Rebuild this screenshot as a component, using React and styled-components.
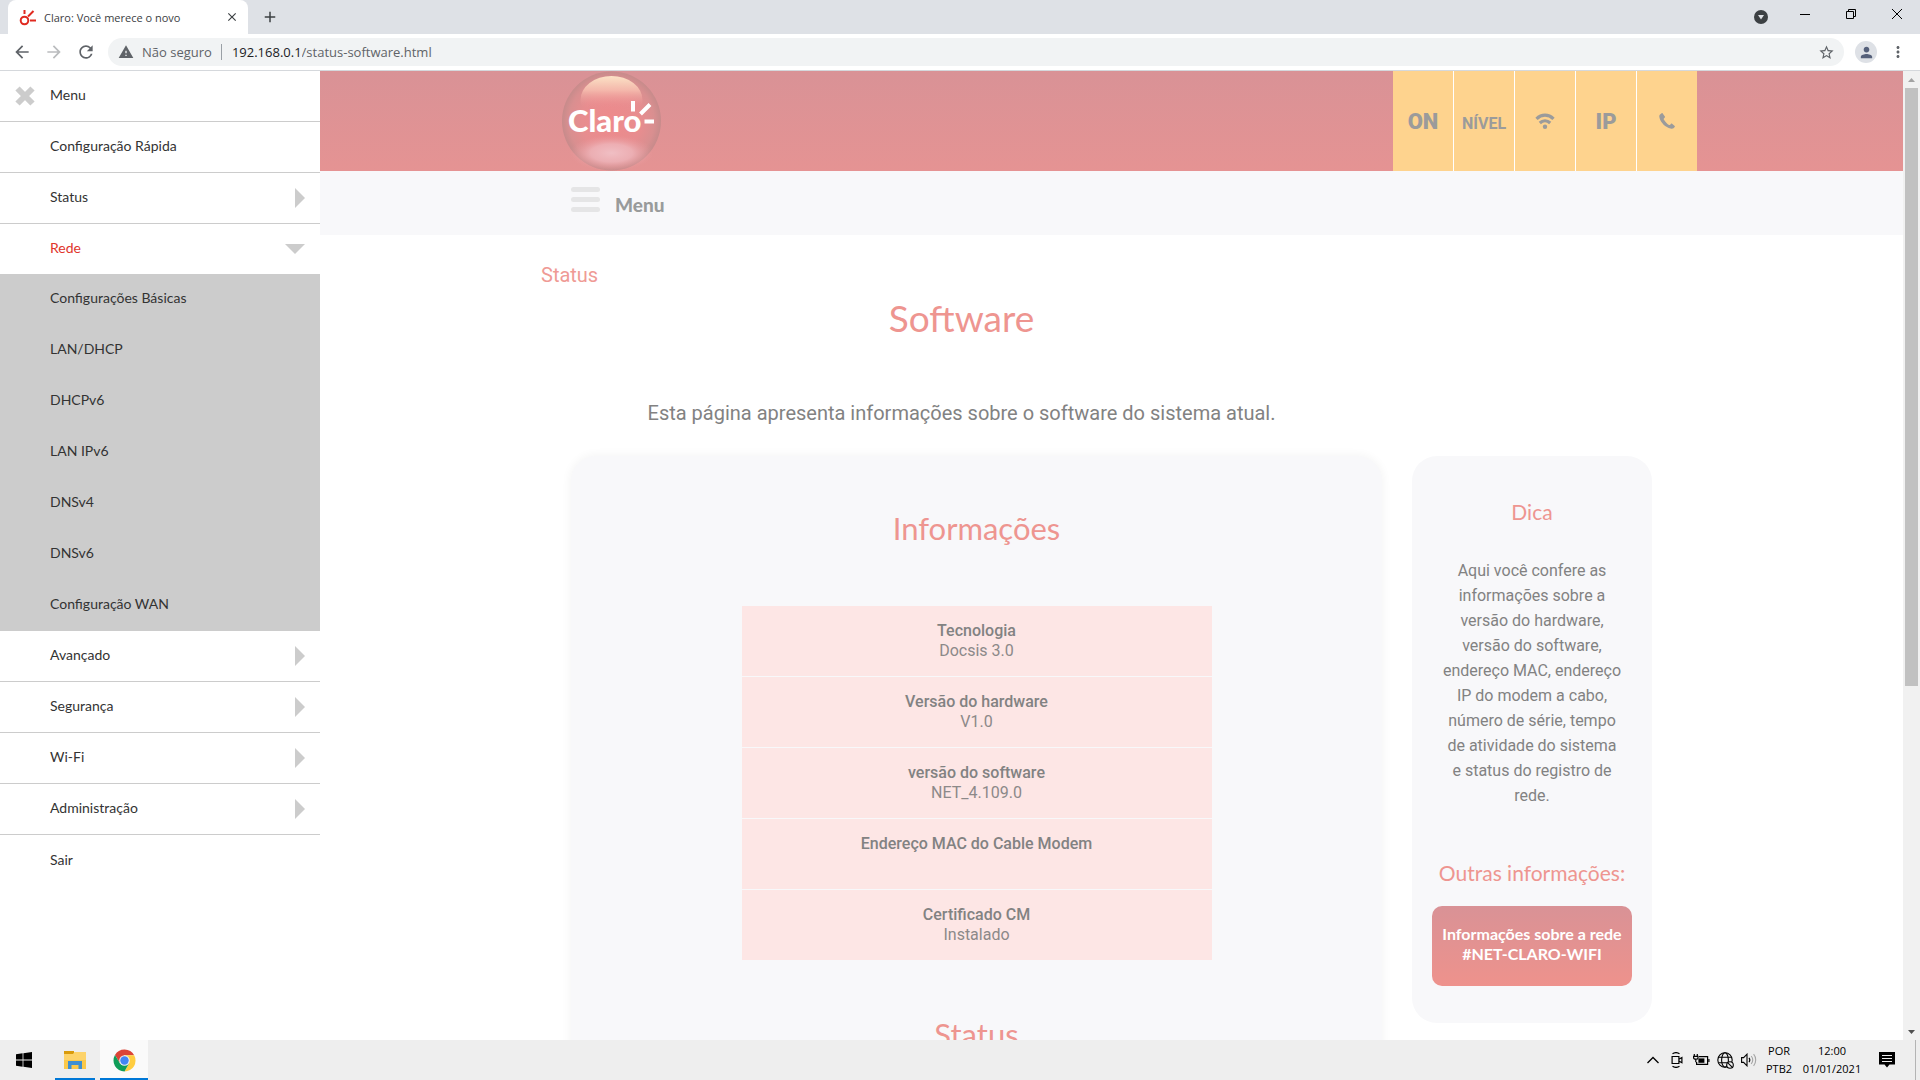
import { useState } from "react";
import styled, { createGlobalStyle } from "styled-components";
import {
  MdArrowBack,
  MdArrowForward,
  MdRefresh,
  MdStarBorder,
  MdMoreVert,
  MdWarning,
  MdPerson,
  MdAdd,
  MdClose,
} from "react-icons/md";

const GlobalStyle = createGlobalStyle`
  * {
    box-sizing: border-box;
  }
  body {
    margin: 0;
    overflow: hidden;
    background-color: #ffffff;
  }
  button {
    margin: 0;
    padding: 0;
    border: none;
    background: none;
    font: inherit;
    color: inherit;
    cursor: pointer;
  }
  a {
    color: inherit;
    text-decoration: none;
  }
`;

const uiFont = `"Open Sans", "Noto Sans", sans-serif`;
const brandFont = `Lato, "Open Sans", sans-serif`;
const textFont = `Roboto, "Liberation Sans", sans-serif`;

const Screen = styled.div`
  display: flex;
  flex-direction: column;
  height: 100vh;
  font-family: ${uiFont};
`;

/* browser frame */

const TabStrip = styled.div`
  display: flex;
  justify-content: space-between;
  flex: none;
  height: 34px;
  padding-left: 8px;
  background-color: #dee1e6;
`;

const TabGroup = styled.div`
  display: flex;
  align-items: center;
`;

const Tab = styled.div`
  display: flex;
  align-items: center;
  gap: 8px;
  width: 240px;
  height: 34px;
  padding: 0 9px 0 11px;
  border-radius: 8px 8px 0 0;
  background-color: #ffffff;
  font-size: 11px;
  color: #3c4043;
`;

const TabTitle = styled.span`
  flex: 1;
  white-space: nowrap;
`;

const IconButton = styled.button`
  display: grid;
  place-items: center;
  flex: none;
  width: ${(props) => props.$width || 32}px;
  height: 28px;
  color: ${(props) => props.$color || "#5f6368"};
`;

const WindowButtons = styled.div`
  display: flex;
`;

const Toolbar = styled.div`
  display: flex;
  align-items: center;
  flex: none;
  height: 37px;
  padding: 0 6px 0 6px;
  border-bottom: 1px solid #d5d8dc;
  background-color: #ffffff;
`;

const AddressBar = styled.form`
  display: flex;
  align-items: center;
  flex: 1;
  height: 28px;
  margin: 0 6px;
  padding: 0 8px 0 10px;
  border-radius: 14px;
  background-color: #f1f3f4;
  font-size: 13px;
  color: #5f6368;
`;

const Security = styled.button`
  display: flex;
  align-items: center;
  gap: 8px;
  padding-right: 9px;
  border-right: 1px solid #9aa0a6;
  line-height: 16px;
`;

const UrlLabel = styled.label`
  display: flex;
  flex: 1;
  align-items: center;
  padding-left: 10px;
  color: #202124;
`;

const UrlInput = styled.input`
  flex: 1;
  min-width: 0;
  padding: 0;
  border: none;
  outline: none;
  background: none;
  font: inherit;
  color: #5f6368;
`;

const Avatar = styled.span`
  display: grid;
  place-items: center;
  width: 22px;
  height: 22px;
  border-radius: 50%;
  background-color: #dee1e6;
  color: #55607a;
`;

/* page */

const Viewport = styled.div`
  display: flex;
  flex: 1;
  min-height: 0;
  overflow: hidden;
`;

const Sidebar = styled.nav`
  flex: none;
  width: 320px;
  font-family: ${brandFont};
  font-size: 14px;
  color: #333333;
`;

const MenuList = styled.ul`
  margin: 0;
  padding: 0;
  list-style: none;
`;

const MenuRow = styled.div`
  display: flex;
  align-items: center;
  height: ${(props) => (props.$open ? 50 : 51)}px;
  padding: 0 15px;
  border-bottom: ${(props) => (props.$line ? "1px solid #cccccc" : "none")};
  color: ${(props) => (props.$open ? "#e0352b" : "inherit")};
`;

const MenuLink = styled.a`
  flex: 1;
  padding: 0 0 3px 35px;
`;

const CloseMenu = styled.button`
  display: flex;
  align-items: center;
  gap: 15px;
`;

const CloseLabel = styled.span`
  padding-bottom: 3px;
`;

const SubMenu = styled.ul`
  margin: 0;
  padding: 0;
  list-style: none;
  background-color: #cccccc;
`;

const SubItem = styled.li`
  display: flex;
  align-items: center;
  height: 51px;
  padding: 0 50px 5px;
`;

const Page = styled.main`
  flex: 1;
  min-width: 0;
  font-family: ${textFont};
  color: #828282;
`;

const Header = styled.header`
  display: flex;
  justify-content: space-between;
  height: 100px;
  padding: 0 206px 0 242px;
  background: linear-gradient(#d99296, #e59393);
`;

const StatusBoxes = styled.div`
  display: flex;
  gap: 1px;
  background-color: #ffffff;
`;

const StatusBox = styled.a`
  display: grid;
  place-items: center;
  width: 60px;
  padding-top: ${(props) => (props.$small ? 4 : 0)}px;
  background-color: #fed38e;
  font-size: ${(props) => (props.$small ? 16 : 22)}px;
  font-weight: ${(props) => (props.$small ? 700 : 900)};
  color: #9b9b9b;
`;

const MenuBar = styled.div`
  display: flex;
  align-items: center;
  height: 64px;
  padding-left: 251px;
  background-color: #f8f8fa;
`;

const MenuToggle = styled.button`
  display: flex;
  align-items: flex-start;
  gap: 15px;
  font-family: ${brandFont};
  font-size: 19px;
  font-weight: 900;
  line-height: 30px;
  color: #999b9b;
`;

const MenuToggleText = styled.span`
  padding-top: 3px;
`;

const Content = styled.div`
  display: grid;
  grid-template-columns: minmax(0, 1fr) 240px;
  column-gap: 30px;
  align-items: start;
  padding: 25px 251px 0 221px;
`;

const Intro = styled.div`
  grid-column: 1;
  text-align: center;
`;

const Crumb = styled.p`
  margin: 0;
  font-size: 20px;
  line-height: 30px;
  text-align: left;
  color: #ef9a95;
`;

const PageTitle = styled.h1`
  margin: 6px 0 0;
  font-family: ${brandFont};
  font-size: 37px;
  font-weight: 400;
  line-height: 44px;
  color: #ee9590;
`;

const Lead = styled.p`
  margin: 58px 0 0;
  font-size: 20px;
  line-height: 30px;
`;

const Card = styled.section`
  grid-column: 1;
  height: 900px;
  margin: 28px 0 0 30px;
  padding: 52px 0 0;
  border-radius: 25px;
  background-color: #f8f8fa;
  box-shadow: 0 0 8px 2px rgba(0, 0, 0, 0.04);
`;

const SectionTitle = styled.h2`
  margin: 0;
  font-family: ${brandFont};
  font-size: 31px;
  font-weight: 400;
  line-height: 40px;
  text-align: center;
  color: #ee9590;
`;

const InfoTable = styled.table`
  display: block;
  width: 470px;
  margin: 58px auto 54px;
  font-size: 16px;
  line-height: 20px;
  text-align: center;
`;

const InfoBody = styled.tbody`
  display: grid;
  gap: 1px;
`;

const InfoRow = styled.tr`
  display: block;
  min-height: 70px;
  padding: 15px 0;
  background-color: #fde6e5;
`;

const InfoName = styled.th`
  display: block;
  padding: 0;
  font-weight: 500;
`;

const InfoValue = styled.td`
  display: block;
  padding: 0;
  font-weight: 400;
  color: #8c8989;
`;

const Aside = styled.aside`
  grid-column: 2;
  margin-top: 28px;
  padding: 41px 20px 37px;
  border-radius: 25px;
  background-color: #f8f8fa;
  text-align: center;
`;

const AsideTitle = styled.h3`
  margin: 0;
  font-family: ${brandFont};
  font-size: 21px;
  font-weight: 400;
  line-height: 30px;
  white-space: nowrap;
  color: #ee9590;
`;

const Tip = styled.p`
  margin: 31px 0 50px;
  font-size: 16px;
  line-height: 25px;
  white-space: pre-line;
`;

const NetworkButton = styled.button`
  width: 100%;
  height: 80px;
  margin-top: 18px;
  padding-bottom: 4px;
  border-radius: 10px;
  background: linear-gradient(#d99296, #ee928c);
  font-family: ${brandFont};
  font-size: 16px;
  font-weight: 700;
  line-height: 20px;
  color: #ffffff;
`;

const ScrollBar = styled.div`
  display: flex;
  flex-direction: column;
  flex: none;
  width: 17px;
  background-color: #f1f1f1;
`;

const ScrollArrow = styled.button`
  display: grid;
  place-items: center;
  height: 17px;
`;

const ScrollTrack = styled.div`
  flex: 1;
  padding: 0 2px;
`;

const ScrollThumb = styled.div`
  height: 64%;
  background-color: #c1c1c1;
`;

/* taskbar */

const Taskbar = styled.footer`
  display: flex;
  justify-content: space-between;
  flex: none;
  height: 40px;
  background-color: #eeeeee;
  color: #000000;
`;

const TaskGroup = styled.div`
  display: flex;
`;

const TaskButton = styled.button`
  display: grid;
  place-items: center;
  width: ${(props) => props.$width}px;
  height: 40px;
  margin-right: ${(props) => props.$after || 0}px;
  border-top: ${(props) => (props.$running ? "2px solid transparent" : "none")};
  border-bottom: ${(props) => (props.$running ? "2px solid #0078d7" : "none")};
  background-color: ${(props) => (props.$active ? "#fafafa" : "transparent")};
`;

const TrayText = styled.div`
  width: ${(props) => props.$width}px;
  padding-top: 2px;
  font-size: 11px;
  line-height: 18px;
  text-align: center;
`;

const ShowDesktop = styled.button`
  width: 5px;
  border-left: 1px solid #b4b4b4;
`;

const menuItems = [
  { label: "Configuração Rápida" },
  { label: "Status", children: [] },
  {
    label: "Rede",
    children: [
      "Configurações Básicas",
      "LAN/DHCP",
      "DHCPv6",
      "LAN IPv6",
      "DNSv4",
      "DNSv6",
      "Configuração WAN",
    ],
  },
  { label: "Avançado", children: [] },
  { label: "Segurança", children: [] },
  { label: "Wi-Fi", children: [] },
  { label: "Administração", children: [] },
  { label: "Sair" },
];

const info = [
  { name: "Tecnologia", value: "Docsis 3.0" },
  { name: "Versão do hardware", value: "V1.0" },
  { name: "versão do software", value: "NET_4.109.0" },
  { name: "Endereço MAC do Cable Modem", value: "" },
  { name: "Certificado CM", value: "Instalado" },
];

const tip = `Aqui você confere as
informações sobre a
versão do hardware,
versão do software,
endereço MAC, endereço
IP do modem a cabo,
número de série, tempo
de atividade do sistema
e status do registro de
rede.`;

const Favicon = () => (
  <svg width="17" height="17" viewBox="0 0 17 17" fill="none" stroke="#e02a20" strokeWidth="2">
    <circle cx="5.5" cy="11.5" r="3.8" />
    <path d="M5.5 1v4M9 7.5L14.5 2M11 11.5h6" />
  </svg>
);

const ClaroLogo = () => (
  <svg width="99" height="100" viewBox="0 0 99 100" role="img" aria-label="Claro">
    <defs>
      <radialGradient id="ball">
        <stop offset="0" stopColor="#ee8a8c" />
        <stop offset="0.6" stopColor="#e78d8f" />
        <stop offset="0.86" stopColor="#d98f90" />
        <stop offset="1" stopColor="#c78b8b" />
      </radialGradient>
      <linearGradient id="shine" x1="0" y1="0" x2="0" y2="1">
        <stop offset="0" stopColor="#fce3c6" />
        <stop offset="0.3" stopColor="#f6bcae" stopOpacity="0.9" />
        <stop offset="0.65" stopColor="#ee8f92" stopOpacity="0" />
      </linearGradient>
      <radialGradient id="glow">
        <stop offset="0" stopColor="#f0bfc4" />
        <stop offset="0.5" stopColor="#eeb4b9" stopOpacity="0.85" />
        <stop offset="1" stopColor="#e99a9d" stopOpacity="0" />
      </radialGradient>
    </defs>
    <circle cx="49.500" cy="50" r="49.500" fill="url(#ball)" />
    <ellipse cx="49.500" cy="29" rx="31" ry="24" fill="url(#shine)" />
    <ellipse cx="49.500" cy="82" rx="42" ry="18" fill="url(#glow)" />
    <text x="6" y="61" fontFamily="Lato, sans-serif" fontSize="31" fontWeight="900" fill="#ffffff">
      Claro
    </text>
    <path d="M71 30v10.500M78.500 43L88 33.500M82.500 50.500H92" stroke="#ffffff" strokeWidth="4" />
  </svg>
);

const Triangle = ({ down }) =>
  down ? (
    <svg width="20" height="10" viewBox="0 0 20 10" fill="#cccccc">
      <path d="M0 0h20L10 10z" />
    </svg>
  ) : (
    <svg width="10" height="20" viewBox="0 0 10 20" fill="#cccccc">
      <path d="M0 0v20l10-10z" />
    </svg>
  );

const WifiIcon = () => (
  <svg width="20" height="16" viewBox="0 0 20 16" fill="none" stroke="#9b9b9b" strokeWidth="3.200">
    <path d="M1.500 5.800C6.500 .8 13.500 .8 18.500 5.800M4.800 10c3-2.800 7.400-2.800 10.400 0" />
    <circle cx="10" cy="13.800" r="2.200" fill="#9b9b9b" stroke="none" />
  </svg>
);

const PhoneIcon = () => (
  <svg width="16" height="16" viewBox="0 0 16 16" fill="#9b9b9b">
    <path d="M2.600 .3L.8 1.700C.2 2.300 .2 3.500 .5 4.700 1.800 9.800 6.500 14.400 11.600 15.500c1.300.3 2.300.2 2.900-.3l1.200-1.200c.3-.3.3-.6 0-.9l-2.600-2.300c-.3-.3-.7-.3-1 0l-1.200 1.100c-.3.2-.6.2-.9 0C8 10.800 6 8.700 4.800 6.500c-.2-.3-.2-.6.1-.9l.9-1c.3-.3.3-.6.1-1L3.700.4C3.400 0 3 0 2.600.3z" />
  </svg>
);

const WindowsIcon = () => (
  <svg width="16" height="16" viewBox="0 0 16 16" fill="#000000">
    <path d="M0 2.2l6.6-.9v6.3H0zM7.4 1.2L16 0v7.6H7.4zM0 8.4h6.6v6.3L0 13.8zM7.4 8.4H16V16l-8.6-1.2z" />
  </svg>
);

const ExplorerIcon = () => (
  <svg width="22" height="18" viewBox="0 0 22 18">
    <path d="M0 0h10v4H0z" fill="#d99b0c" />
    <path d="M0 3h9l1.5-2H22v17H0z" fill="#fdd36a" />
    <path d="M0 9h22v9H0z" fill="#fcc94a" />
    <path d="M4 10h14v8h-3.5v-4h-7v4H4z" fill="#3f8fd2" />
  </svg>
);

const ChromeIcon = () => (
  <svg width="23" height="23" viewBox="0 0 48 48">
    <path d="M24 13h20.2A23 23 0 0 0 4.1 12.5L14.5 29.5z" fill="#db4437" />
    <path d="M33.5 29.5L24 47A23 23 0 0 0 44.2 13H24z" fill="#ffcd40" />
    <path d="M14.5 29.5L4.1 12.5A23 23 0 0 0 24 47l9.5-17.5z" fill="#0f9d58" />
    <circle cx="24" cy="24" r="11" fill="#f1f1f1" />
    <circle cx="24" cy="24" r="8.8" fill="#4285f4" />
  </svg>
);

const ChevronUp = () => (
  <svg width="12" height="8" viewBox="0 0 12 8" fill="none" stroke="#000000" strokeWidth="1.3">
    <path d="M0.5 7L6 1.5 11.5 7" />
  </svg>
);

const MeetIcon = () => (
  <svg width="12" height="16" viewBox="0 0 12 16" fill="none" stroke="#000000" strokeWidth="1.2">
    <path d="M1.100 4.500h6.800v7H1.100zM7.900 7.200l3-1.700v5.200l-3-1.700" />
    <path d="M1.500 1.800C3.500 .4 6.500 .4 8.500 1.800M1.500 14.300c2 1.300 5 1.300 7 0" />
  </svg>
);

const BatteryIcon = () => (
  <svg width="17" height="12" viewBox="0 0 17 12" fill="none" stroke="#000000" strokeWidth="1.2">
    <path d="M6 2.600h8.600v7.800H3.600V8" />
    <path d="M15.900 5v3" />
    <path d="M5.400 4.400h6v4.400h-6z" fill="#000000" stroke="none" />
    <path d="M1.300 0v2.200M4.300 0v2.200M.6 2.300H5v1.600C5 5.600 .6 5.600 .6 3.900zM2.800 5.200v3" />
  </svg>
);

const GlobeIcon = () => (
  <svg width="17" height="17" viewBox="0 0 17 17" fill="none" stroke="#000000" strokeWidth="1.1">
    <circle cx="8" cy="8" r="7.2" />
    <ellipse cx="8" cy="8" rx="3.4" ry="7.2" />
    <path d="M1.500 5.300h13M1.500 10.700h9" />
    <circle cx="13" cy="13" r="3.300" fill="#eeeeee" />
    <path d="M10.800 10.800l4.400 4.400" />
  </svg>
);

const SpeakerIcon = () => (
  <svg width="16" height="14" viewBox="0 0 16 14" fill="none" stroke="#000000" strokeWidth="1.1">
    <path d="M.6 4.600h2L6 1.200v11.600L2.600 9.400h-2z" />
    <path d="M8 4.800c1 1.300 1 3.100 0 4.400" />
    <path d="M10.200 3c1.800 2.300 1.800 5.700 0 8M12.600 1.200c2.800 3.300 2.800 8.300 0 11.600" stroke="#a5a5a5" />
  </svg>
);

const NoticeIcon = () => (
  <svg width="16" height="16" viewBox="0 0 16 16">
    <path d="M0 0h16v12.500h-5.500L8 15.500l-2.500-3H0z" fill="#000000" />
    <path d="M3 3.500h10M3 6.500h10M3 9.500h10" stroke="#eeeeee" />
  </svg>
);

function Browser() {
  const [path, setPath] = useState("/status-software.html");

  return (
    <>
      <TabStrip>
        <TabGroup>
          <Tab>
            <Favicon />
            <TabTitle>Claro: Você merece o novo</TabTitle>
            <IconButton $width={14} $color="#3c4043" aria-label="Fechar guia">
              <MdClose size={14} />
            </IconButton>
          </Tab>
          <IconButton $width={44} $color="#3c4043" aria-label="Nova guia">
            <MdAdd size={18} />
          </IconButton>
        </TabGroup>
        <WindowButtons>
          <IconButton $width={42} aria-label="Pesquisar guias">
            <svg width="14" height="20" viewBox="0 -6 14 20">
              <circle cx="7" cy="7" r="7" fill="#3c4043" />
              <path d="M4 5h6l-3 4.500z" fill="#dee1e6" />
            </svg>
          </IconButton>
          <IconButton $width={46} aria-label="Minimizar">
            <svg width="10" height="10" stroke="#000000">
              <path d="M0 5.500h10" />
            </svg>
          </IconButton>
          <IconButton $width={46} aria-label="Restaurar">
            <svg width="10" height="10" fill="none" stroke="#000000">
              <path d="M.5 2.500h7v7h-7zM2.500 2.500v-2h7v7h-2" />
            </svg>
          </IconButton>
          <IconButton $width={46} aria-label="Fechar">
            <svg width="10" height="10" stroke="#000000">
              <path d="M0 0l10 10M10 0L0 10" />
            </svg>
          </IconButton>
        </WindowButtons>
      </TabStrip>
      <Toolbar>
        <IconButton aria-label="Voltar">
          <MdArrowBack size={20} />
        </IconButton>
        <IconButton $color="#babcbe" aria-label="Avançar">
          <MdArrowForward size={20} />
        </IconButton>
        <IconButton aria-label="Recarregar">
          <MdRefresh size={20} />
        </IconButton>
        <AddressBar onSubmit={(e) => e.preventDefault()}>
          <Security type="button">
            <MdWarning size={16} />
            Não seguro
          </Security>
          <UrlLabel>
            192.168.0.1
            <UrlInput value={path} onChange={(e) => setPath(e.target.value)} />
          </UrlLabel>
          <IconButton type="button" $width={20} aria-label="Favoritos">
            <MdStarBorder size={17} />
          </IconButton>
        </AddressBar>
        <IconButton aria-label="Perfil">
          <Avatar>
            <MdPerson size={17} />
          </Avatar>
        </IconButton>
        <IconButton aria-label="Opções">
          <MdMoreVert size={18} />
        </IconButton>
      </Toolbar>
    </>
  );
}

function SideMenu() {
  const [open, setOpen] = useState("Rede");

  return (
    <Sidebar>
      <MenuRow $line>
        <CloseMenu>
          <svg width="20" height="20" viewBox="0 0 20 20" stroke="#cccccc" strokeWidth="6">
            <path d="M2.500 2.500l15 15M17.500 2.500l-15 15" />
          </svg>
          <CloseLabel>Menu</CloseLabel>
        </CloseMenu>
      </MenuRow>
      <MenuList>
        {menuItems.map((item, i) => {
          const isOpen = item.label === open;
          return (
            <li key={item.label}>
              <MenuRow $open={isOpen} $line={!isOpen && i < menuItems.length - 1}>
                <MenuLink
                  href="#"
                  onClick={() => item.children && setOpen(isOpen ? "" : item.label)}
                >
                  {item.label}
                </MenuLink>
                {item.children && <Triangle down={isOpen} />}
              </MenuRow>
              {isOpen && (
                <SubMenu>
                  {item.children.map((child) => (
                    <SubItem key={child}>
                      <a href="#">{child}</a>
                    </SubItem>
                  ))}
                </SubMenu>
              )}
            </li>
          );
        })}
      </MenuList>
    </Sidebar>
  );
}

function SoftwarePage() {
  return (
    <Page>
      <Header>
        <ClaroLogo />
        <StatusBoxes>
          <StatusBox href="#">ON</StatusBox>
          <StatusBox href="#" $small>
            NÍVEL
          </StatusBox>
          <StatusBox href="#" aria-label="Wi-Fi">
            <WifiIcon />
          </StatusBox>
          <StatusBox href="#">IP</StatusBox>
          <StatusBox href="#" aria-label="Telefone">
            <PhoneIcon />
          </StatusBox>
        </StatusBoxes>
      </Header>
      <MenuBar>
        <MenuToggle>
          <svg width="29" height="25" viewBox="0 0 29 25" fill="#e5e5e6">
            <rect width="29" height="5" rx="2.500" />
            <rect y="10" width="29" height="5" rx="2.500" />
            <rect y="20" width="29" height="5" rx="2.500" />
          </svg>
          <MenuToggleText>Menu</MenuToggleText>
        </MenuToggle>
      </MenuBar>
      <Content>
        <Intro>
          <Crumb>Status</Crumb>
          <PageTitle>Software</PageTitle>
          <Lead>Esta página apresenta informações sobre o software do sistema atual.</Lead>
        </Intro>
        <Card>
          <SectionTitle>Informações</SectionTitle>
          <InfoTable>
            <InfoBody>
              {info.map((row) => (
                <InfoRow key={row.name}>
                  <InfoName scope="row">{row.name}</InfoName>
                  <InfoValue>{row.value}</InfoValue>
                </InfoRow>
              ))}
            </InfoBody>
          </InfoTable>
          <SectionTitle>Status</SectionTitle>
        </Card>
        <Aside>
          <AsideTitle>Dica</AsideTitle>
          <Tip>{tip}</Tip>
          <AsideTitle>Outras informações:</AsideTitle>
          <NetworkButton>
            Informações sobre a rede
            <br />
            #NET-CLARO-WIFI
          </NetworkButton>
        </Aside>
      </Content>
    </Page>
  );
}

function App() {
  return (
    <Screen>
      <GlobalStyle />
      <Browser />
      <Viewport>
        <SideMenu />
        <SoftwarePage />
        <ScrollBar>
          <ScrollArrow aria-label="Rolar para cima">
            <svg width="7" height="4" fill="#a3a3a3">
              <path d="M0 4h7L3.500 0z" />
            </svg>
          </ScrollArrow>
          <ScrollTrack>
            <ScrollThumb />
          </ScrollTrack>
          <ScrollArrow aria-label="Rolar para baixo">
            <svg width="7" height="4" fill="#505050">
              <path d="M0 0h7L3.500 4z" />
            </svg>
          </ScrollArrow>
        </ScrollBar>
      </Viewport>
      <Taskbar>
        <TaskGroup>
          <TaskButton $width={48} $after={7} aria-label="Iniciar">
            <WindowsIcon />
          </TaskButton>
          <TaskButton $width={40} $after={5} $running aria-label="Explorador de Arquivos">
            <ExplorerIcon />
          </TaskButton>
          <TaskButton $width={48} $running $active aria-label="Google Chrome">
            <ChromeIcon />
          </TaskButton>
        </TaskGroup>
        <TaskGroup>
          <TaskButton $width={24} aria-label="Mostrar ícones ocultos">
            <ChevronUp />
          </TaskButton>
          <TaskButton $width={24} aria-label="Reunir agora">
            <MeetIcon />
          </TaskButton>
          <TaskButton $width={24} aria-label="Bateria">
            <BatteryIcon />
          </TaskButton>
          <TaskButton $width={24} aria-label="Rede">
            <GlobeIcon />
          </TaskButton>
          <TaskButton $width={24} aria-label="Volume">
            <SpeakerIcon />
          </TaskButton>
          <TrayText $width={36}>
            POR
            <br />
            PTB2
          </TrayText>
          <TrayText $width={70}>
            12:00
            <br />
            01/01/2021
          </TrayText>
          <TaskButton $width={40} $after={8} aria-label="Notificações">
            <NoticeIcon />
          </TaskButton>
          <ShowDesktop aria-label="Mostrar área de trabalho" />
        </TaskGroup>
      </Taskbar>
    </Screen>
  );
}

export default App;
